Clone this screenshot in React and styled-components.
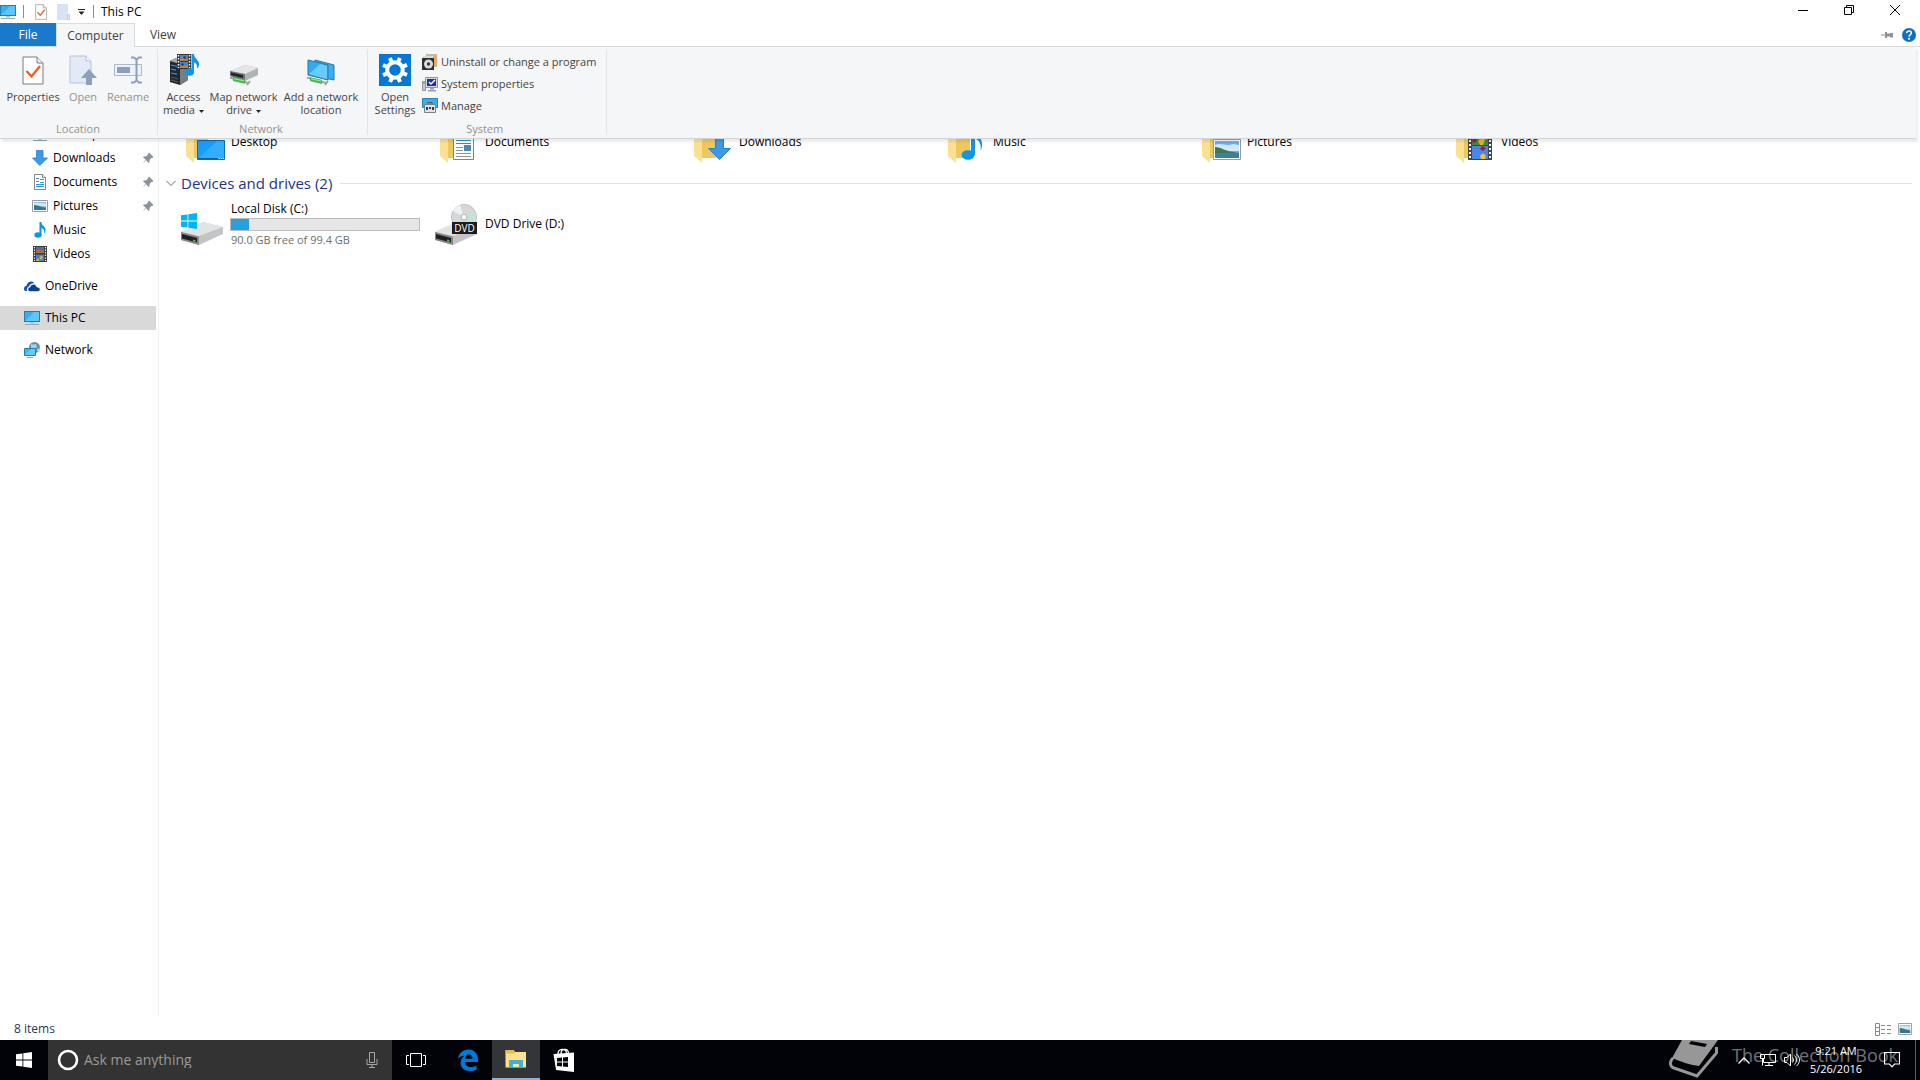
import React, { useState } from "react";
import styled, { createGlobalStyle } from "styled-components";

const GlobalStyle = createGlobalStyle`
  * {
    box-sizing: border-box;
  }

  body {
    margin: 0;
    background: #fff;
    color: #000;
    font: 12px/16px "Open Sans", "Noto Sans", sans-serif;
  }

  button, input {
    font: inherit;
    color: inherit;
    border: 0;
    padding: 0;
    margin: 0;
    background: none;
  }
`;

const Screen = styled.div`
  display: flex;
  flex-direction: column;
  height: 100vh;
  overflow: hidden;
`;

// ---------- title bar and tabs ----------

const TitleBar = styled.header`
  display: flex;
  align-items: center;
  height: 23px;
  padding-right: 2px;
`;

const QuickButton = styled.button`
  display: flex;
  justify-content: center;
  width: ${(props) => props.$width || 22}px;
`;

const Divider = styled.span`
  width: 1px;
  height: 13px;
  background: #8c8c8c;
  margin: 0 7px;
`;

const Title = styled.h1`
  flex: 1;
  margin: 0;
  font-size: 12px;
  font-weight: 400;
`;

const CaptionButton = styled.button`
  display: flex;
  align-items: center;
  align-self: flex-start;
  justify-content: center;
  width: 46px;
  height: 20px;
`;

const TabBar = styled.nav`
  display: flex;
  align-items: stretch;
  height: 24px;
  border-bottom: 1px solid #d9dadb;
`;

const Tab = styled.button`
  width: ${(props) => props.$width}px;
  color: ${(props) => (props.$file ? "#fff" : "#444")};
  background: ${(props) => (props.$file ? "#1979ca" : props.$active ? "#f5f6f7" : "none")};
  border: solid #dadbdc;
  border-width: ${(props) => (props.$active ? "1px 1px 0 1px" : "0")};
  margin-bottom: ${(props) => (props.$active ? "-1px" : "0")};
`;

const TabTools = styled.div`
  display: flex;
  align-items: center;
  gap: 8px;
  margin-left: auto;
  padding-right: 4px;

  button {
    display: flex;
  }
`;

// ---------- ribbon ----------

const Body = styled.div`
  position: relative;
  display: flex;
  flex: 1;
  min-height: 0;
`;

// The ribbon is collapsed, so it opens over the folder instead of pushing it down
const Ribbon = styled.section`
  position: absolute;
  top: 0;
  left: 0;
  right: 4px;
  z-index: 1;
  display: flex;
  height: 92px;
  padding: 2px 0 3px;
  font-size: 11px;
  color: #444;
  background: #f5f6f7;
  border-bottom: 1px solid #d2d3d4;
  box-shadow: 2px 3px 2px rgba(0, 0, 0, 0.08);
`;

const Group = styled.div`
  display: flex;
  flex-direction: column;
  justify-content: space-between;
  padding: 0 ${(props) => props.$right}px 0 ${(props) => props.$left}px;
  border-right: 1px solid #e2e3e4;
`;

const GroupRow = styled.div`
  display: flex;
  align-items: flex-start;
`;

const GroupLabel = styled.div`
  text-align: center;
  line-height: 13px;
  color: #929292;
`;

const BigButton = styled.button`
  display: flex;
  flex-direction: column;
  align-items: center;
  gap: 4px;
  width: ${(props) => props.$width}px;
  padding-top: 5px;
  line-height: 13px;
  white-space: nowrap;
  color: ${(props) => (props.disabled ? "#929292" : "#444")};
`;

const SmallList = styled.div`
  display: flex;
  flex-direction: column;
  margin-left: 5px;
  padding-top: 2px;
`;

const SmallButton = styled.button`
  display: flex;
  align-items: center;
  gap: 3px;
  height: 22px;
  white-space: nowrap;
`;

// ---------- navigation and content ----------

const Sidebar = styled.nav`
  flex: none;
  width: 159px;
  padding: 75px 2px 0 0;
  border-right: 1px solid #f0f0f0;
`;

const NavItem = styled.button`
  display: flex;
  align-items: center;
  width: 100%;
  height: 24px;
  gap: 5px;
  margin-top: ${(props) => (props.$root ? 8 : 0)}px;
  padding: 0 2px 0 ${(props) => (props.$root ? 24 : 32)}px;
  text-align: left;
  background: ${(props) => (props.$selected ? "#d9d9d9" : "none")};
`;

const NavLabel = styled.span`
  flex: 1;
`;

const Content = styled.main`
  flex: 1;
  min-width: 0;
  padding: 65px 8px 0 7px;
`;

const Tiles = styled.div`
  display: grid;
  grid-template-columns: repeat(auto-fill, 254px);
  padding-left: 11px;
`;

const Tile = styled.div`
  display: flex;
  align-items: center;
  gap: 6px;
  height: 60px;
`;

const TileText = styled.div`
  display: flex;
  flex-direction: column;
`;

const Muted = styled.span`
  font-size: 11px;
  color: #6d6d6d;
`;

const Capacity = styled.div`
  width: 190px;
  height: 13px;
  margin: 1px 0 1px -1px;
  background: #e6e6e6;
  border: 1px solid #bcbcbc;
`;

const CapacityFill = styled.div`
  height: 100%;
  background: #26a0da;
`;

const SectionHeader = styled.h2`
  display: flex;
  align-items: center;
  height: 22px;
  margin: 0;
  font-size: 15px;
  font-weight: 400;
  color: #1e3287;

  svg {
    margin-right: 5px;
  }

  &::after {
    content: "";
    flex: 1;
    height: 1px;
    margin-left: 8px;
    background: #e2e2e2;
  }
`;

const StatusBar = styled.footer`
  display: flex;
  align-items: center;
  height: 24px;
  padding: 2px 8px 0 14px;
  color: #1e395b;
`;

const ViewButtons = styled.div`
  display: flex;
  gap: 7px;
  margin-left: auto;

  button {
    display: flex;
  }
`;

// ---------- taskbar ----------

const TaskBar = styled.footer`
  position: relative;
  display: flex;
  height: 40px;
  color: #fff;
  background: #010308;
`;

const TaskButton = styled.button`
  display: flex;
  align-items: center;
  justify-content: center;
  width: 48px;
  margin-right: ${(props) => (props.$spaced ? 4 : 0)}px;
  background: ${(props) => (props.$active ? "#343539" : "none")};
  border-bottom: ${(props) => (props.$active ? "2px solid #76b9ed" : "0")};
`;

const Search = styled.label`
  display: flex;
  align-items: center;
  gap: 5px;
  width: 344px;
  padding: 0 14px 0 9px;
  background: #333;

  input {
    flex: 1;
    min-width: 0;
    font-size: 14px;
    outline: none;
  }

  input::placeholder {
    color: #9a9a9a;
    opacity: 1;
  }
`;

const Tray = styled.div`
  display: flex;
  align-items: center;
  margin-left: auto;
  padding-right: 4px;

  button {
    display: flex;
    justify-content: center;
    width: 24px;
  }

  button:last-child {
    width: 48px;
    height: 40px;
    align-items: center;
    border-right: 1px solid #5a5c60;
  }
`;

const Clock = styled.time`
  width: 64px;
  font-size: 11px;
  line-height: 18px;
  text-align: center;
`;

const Watermark = styled.div`
  position: absolute;
  top: 0;
  right: 22px;
  display: flex;
  align-items: flex-start;
  gap: 13px;
  font-size: 18px;
  line-height: 30px;
  color: rgba(255, 255, 255, 0.45);
  pointer-events: none;
`;

// ---------- icons ----------

const Monitor = ({ size = 16 }) => (
  <svg width={size} height={size} viewBox="0 0 16 16">
    <rect x="0.5" y="1.5" width="15" height="10" fill="#31b0f8" stroke="#2a7ca8" />
    <path d="M1 11 L10 2 H15 V11Z" fill="#5cc6ff" />
    <path d="M6 12h4v1.500H6z" fill="#a8c4d4" />
    <path d="M1 14.500h14" stroke="#8aa9ba" />
  </svg>
);

const CheckPage = ({ w = 22, h = 29 }) => (
  <svg width={w} height={h} viewBox="0 0 22 29">
    <path d="M1 1h14l6 6v21H1z" fill="#fff" stroke="#7a7a7a" />
    <path d="M15 1v6h6" fill="#eee" stroke="#7a7a7a" />
    <path d="M4.500 15l5 5.500L18 10" fill="none" stroke="#e8622a" strokeWidth="2.400" />
  </svg>
);

const PaleFolder = () => (
  <svg width="13" height="16" viewBox="0 0 13 16">
    <path d="M0 0h11v10h2v6H0z" fill="#d6e2f5" />
    <path d="M10.500 10.500h2v5h-2z" fill="#e8eefa" stroke="#bfcde4" />
  </svg>
);

const OpenPage = () => (
  <svg width="28" height="30" viewBox="0 0 28 30">
    <path d="M1 1h16l5 5v22H1z" fill="#e2eaf7" stroke="#b5c4dd" />
    <path d="M17 1v5h5" fill="#f3f6fb" stroke="#b5c4dd" />
    <path d="M20 14l8 9h-5v7h-6v-7h-5z" fill="#8c9fbd" />
  </svg>
);

const RenameBox = () => (
  <svg width="28" height="28" viewBox="0 0 28 28">
    <path d="M0.500 8.500h27v11h-27z" fill="#edf2fb" stroke="#a9b9d3" />
    <path d="M3 11h13v6H3z" fill="#8c9fbd" />
    <path d="M17 1.500h3l2.500 2 2.500-2h3M17 26.500h3l2.500-2 2.500 2h3M22.500 3v22" fill="none" stroke="#8c9fbd" strokeWidth="2" />
  </svg>
);

const Note = ({ w = 16, h = 16 }) => (
  <svg width={w} height={h} viewBox="0 0 16 16">
    <ellipse cx="6" cy="13" rx="3.700" ry="2.800" fill="#0e96ea" />
    <path d="M7.500 0h2c0 4 4.500 4 4 8.500-.1 1.500-.8 2.500-1.500 3 .8-3-.5-5-2.500-5.500V13h-2z" fill="#0e96ea" />
  </svg>
);

const Film = ({ w = 14, h = 16 }) => (
  <svg width={w} height={h} viewBox="0 0 14 16">
    <path d="M0 0h14v16H0z" fill="#3c3c3c" />
    <path d="M1.500 1v14M12.500 1v14" stroke="#f4f4f4" strokeWidth="1.200" strokeDasharray="1.300 1.300" />
    <path d="M3 1h8v6H3z" fill="#4a6cb8" />
    <path d="M3 8.500h8V15H3z" fill="#3f7de0" />
    <path d="M3 5l3-2 2 2 3-1v3H3z" fill="#a8772b" />
    <path d="M8 9.500l2 1.500-1 2.500H7.500L6.500 11zM4 13l2-1v3H3z" fill="#e5b321" />
    <path d="M5 1.500l2 1-1 2-2-1.500z" fill="#d0453b" />
  </svg>
);

const MediaServer = () => (
  <svg width="32" height="32" viewBox="0 0 32 32">
    <path d="M2 7l6-3 12 2v20l-8 5-10-3z" fill="#23272c" />
    <path d="M12 10l8-4v20l-8 5z" fill="#777d84" />
    <path d="M2 7l6-3 12 2-8 4z" fill="#a3a9af" />
    <path d="M3 11l7 1.500M3 15l5 1.200M3 19l6 1.200" stroke="#1ba1f2" strokeWidth="1.200" />
    <path d="M3 23l7 2M3 26l7 2" stroke="#55616c" />
    <path d="M9 0h14v15H9z" fill="#333" />
    <path d="M10.500 1v13M21.500 1v13" stroke="#fff" strokeDasharray="1.500 1.500" strokeWidth="1.500" />
    <path d="M12 1h8v6h-8zM12 8h8v6h-8z" fill="#4f7fd6" />
    <path d="M12 5l3-2 3 3 2-1v2h-8zM12 12l3-3 2 3 3-1v3h-8z" fill="#b58a35" />
    <path d="M16 2l2 1-1 2-2-1zM14 9l2 1-1 2-2-1z" fill="#3a3140" />
    <ellipse cx="21.500" cy="18" rx="4.700" ry="3.800" fill="#1294ee" />
    <path d="M23.500 0h2.500c0 5 6 6 5 11-.3 2-1.200 3-2.200 3.500.8-4-.8-5.500-2.800-6V18h-2.500z" fill="#1294ee" />
  </svg>
);

const NetDrive = () => (
  <svg width="32" height="32" viewBox="0 0 32 32">
    <path d="M2 17L17 11l13 3v7l-13 6L2 22z" fill="#b0b3b5" />
    <path d="M2 17L17 11l13 3-13 6z" fill="#e3e5e6" />
    <path d="M2 17l15 3v7L2 22z" fill="#707375" />
    <path d="M3 18.500l12 2.800v2.700L3 21z" fill="#1f2122" />
    <path d="M5 23l12 2.500v4.200L5 27z" fill="#43b549" />
    <path d="M6 24l10 2.300v1.200L6 25.200z" fill="#9be597" />
    <path d="M17 28l4 1.500M2 23.500l3 1M22 27l-3 4" stroke="#a3a3a3" strokeWidth="2" />
  </svg>
);

const NetPlaces = () => (
  <svg width="32" height="32" viewBox="0 0 32 32">
    <path d="M10 6l19 5v15l-19-4z" fill="#3bb0ef" stroke="#2577a9" />
    <path d="M3 6l20 5v15L3 21z" fill="#2fabf4" stroke="#2577a9" />
    <path d="M4 20L15 10l7 1.800V25z" fill="#68ccff" />
    <path d="M5 23l12 3v4L5 27z" fill="#43b549" />
    <path d="M6 24l10 2.500v1.200L6 25.200z" fill="#9be597" />
    <path d="M17 28l5 1M2 23.500l3 1M23 27l-3 4" stroke="#a3a3a3" strokeWidth="2" />
  </svg>
);

const GearTile = () => (
  <svg width="32" height="32" viewBox="0 0 32 32">
    <path d="M0 0h32v32H0z" fill="#0078d7" />
    <circle cx="16" cy="16" r="7.800" fill="none" stroke="#fff" strokeWidth="4" />
    <g stroke="#fff" strokeWidth="4">
      {[22, 67, 112, 157].map((angle) => (
        <path key={angle} d="M16 3v5M16 24v5" transform={`rotate(${angle} 16 16)`} />
      ))}
    </g>
  </svg>
);

const Uninstall = () => (
  <svg width="16" height="16" viewBox="0 0 16 16">
    <path d="M4 0h11v13H4z" fill="#c9b8a3" />
    <path d="M12 2h3v10h-3z" fill="#eca662" />
    <path d="M1 2h10v3H1z" fill="#d8dbdc" />
    <path d="M0 4h12v12H0z" fill="#2e3032" />
    <circle cx="6.500" cy="10" r="4.500" fill="#d8dcdd" />
    <circle cx="6.500" cy="10" r="1.700" fill="#34383a" />
  </svg>
);

const SystemIcon = () => (
  <svg width="16" height="16" viewBox="0 0 16 16">
    <path d="M0.500 5.500h3v9h-3z" fill="#c8cacb" stroke="#909496" />
    <path d="M1 7h2" stroke="#48b04c" />
    <path d="M3.500 1.500h12v10h-12z" fill="#d6d9da" stroke="#929698" />
    <path d="M5 3h9v7H5z" fill="#1c2fb5" />
    <path d="M7 6l2 2 4-4" fill="none" stroke="#fff" strokeWidth="1.500" />
    <path d="M8 12h4v1.500H8zM6 14h8v1.500H6z" fill="#9b9fa1" />
  </svg>
);

const ManageIcon = () => (
  <svg width="16" height="16" viewBox="0 0 16 16">
    <path d="M0.500 0.500h15v9h-15z" fill="#36aff2" stroke="#2b83b2" />
    <path d="M6 6.500V4.500h4v2" fill="none" stroke="#555" />
    <path d="M2.500 6.500h11v8h-11z" fill="#dfe3e5" stroke="#7a8083" />
    <path d="M4 9h2v3H4zM10 9h2v3h-2zM7 9h2v2H7z" fill="#3a3f42" />
  </svg>
);

const DownArrow = ({ w = 16, h = 16 }) => (
  <svg width={w} height={h} viewBox="0 0 16 16">
    <path d="M4.500 0.500h6.500V8h4.500L7.800 15.500 0.500 8h4z" fill="#3b99e8" stroke="#2c7fc8" strokeWidth="0.800" />
  </svg>
);

const DocPage = () => (
  <svg width="16" height="16" viewBox="0 0 16 16">
    <path d="M2.500 0.500h8l3 3v12h-11z" fill="#fff" stroke="#858b8f" />
    <path d="M10.500 0.500v3h3" fill="#eee" stroke="#858b8f" />
    <path d="M4 4.500h3M8 5.500h4M4 7.500h3M8 8.500h4M4 10.500h8M4 12.500h8" stroke="#2f9bd0" />
  </svg>
);

const Photo = ({ w = 16, h = 12 }) => (
  <svg width={w} height={h} viewBox="0 0 16 12" preserveAspectRatio="none">
    <path d="M0.500 0.500h15v11h-15z" fill="#fff" stroke="#969b9f" />
    <path d="M2 2h12v8H2z" fill="#8cc4ef" />
    <path d="M2 3.500c3-2 5 .5 8-.5l4 1v2H2z" fill="#cfe8fa" />
    <path d="M2 5c3 0 6 1 9 2.500L14 8H2z" fill="#3f7d60" />
    <path d="M2 7.500h12V10H2z" fill="#37719e" />
  </svg>
);

const Cloud = () => (
  <svg width="16" height="16" viewBox="0 0 16 16">
    <path d="M0 11c0-2 1-3 2.500-3.200C3 4.500 6 3 8.500 3.700c1 .3 1.600.9 2 1.600C7.500 5 5.500 6.500 5 8.500c-1.700.5-2.400 2-2 4.500H2C.8 13 0 12.500 0 11z" fill="#1056b4" />
    <path d="M4 11.500c0-1.500 1-2.300 2.200-2.400C6.500 7 8.500 6 10.300 6.400c1.400.3 2.300 1.400 2.500 2.700 2 0 3.200 1 3.200 2.400 0 1.300-1 2-2.300 2H6.200C4.900 13.500 4 12.700 4 11.500z" fill="#103f91" stroke="#fff" strokeWidth="0.500" />
  </svg>
);

const NetworkIcon = () => (
  <svg width="16" height="16" viewBox="0 0 16 16">
    <circle cx="10.500" cy="5.500" r="5.500" fill="#5596b8" />
    <path d="M7 2c2 1 3 0 5 0l1 3-3 2-3-1zM13 7l3-1-1 4-2-1z" fill="#a9d3e4" />
    <path d="M0.500 6.500h11v7h-11z" fill="#39b4fa" stroke="#2a7ca8" />
    <path d="M1 13l6-6h4v6z" fill="#67caff" />
    <path d="M3 15.500h6" stroke="#8aa9ba" />
  </svg>
);

const Pin = () => (
  <svg width="12" height="12" viewBox="0 0 12 12">
    <path d="M7 0.500l4.500 4.500-1 1-.8-.3L7.500 8l.2 2-1 1L4.200 8.300 0.500 11.500 3.700 7.700 1 5.200l1-1 2 .2 2.200-2.200L6 1.500z" fill="#8b949c" />
  </svg>
);

const Folder = ({ children }) => (
  <svg width="48" height="48" viewBox="0 0 48 48">
    <path d="M9 4h22v36H14z" fill="#eec75f" />
    <path d="M9 4l8 4v37l-8-7z" fill="#fbe092" />
    {children}
  </svg>
);

const Disk = ({ children }) => (
  <svg width="48" height="48" viewBox="0 0 48 48">
    <path d="M4 32l22-10 20 5v7L22 45 4 40z" fill="#c3c4c6" />
    <path d="M4 32l22-10 20 5-24 9z" fill="#e2e3e5" />
    <path d="M4 32l18 4.500V45L4 40z" fill="#87898b" />
    <path d="M5 34l15 4v4.500L5 38.500z" fill="#1d1f20" />
    <path d="M16 39.500l2.500.6v1.800l-2.500-.6z" fill="#3dc448" />
    {children}
  </svg>
);

const WindowsMark = ({ color = "#00b6f0" }) => (
  <path
    d="M0 2.300l6.500-.9v6.200H0zM7.300 1.300L16 0v7.600H7.300zM0 8.400h6.500v6.200L0 13.700zM7.300 8.400H16V16l-8.700-1.300z"
    fill={color}
  />
);

const Chevron = () => (
  <svg width="10" height="7" viewBox="0 0 10 7">
    <path d="M0.500 1L5 5.500 9.500 1" fill="none" stroke="#6d6d6d" />
  </svg>
);

const CaretIcon = styled.svg`
  margin-left: 4px;
  vertical-align: middle;
`;

const Caret = () => (
  <CaretIcon width="5" height="3" viewBox="0 0 5 3">
    <path d="M0 0h5L2.500 3z" fill="#222" />
  </CaretIcon>
);

const IconBox = styled.span`
  display: flex;
  flex: none;
  align-items: center;
  justify-content: center;
  width: ${(props) => props.$size}px;
  height: ${(props) => props.$size}px;
`;

const navItems = [
  { label: "Desktop", icon: <Monitor />, pinned: true },
  { label: "Downloads", icon: <DownArrow />, pinned: true },
  { label: "Documents", icon: <DocPage />, pinned: true },
  { label: "Pictures", icon: <Photo />, pinned: true },
  { label: "Music", icon: <Note /> },
  { label: "Videos", icon: <Film /> },
  { label: "OneDrive", icon: <Cloud />, root: true },
  { label: "This PC", icon: <Monitor />, root: true },
  { label: "Network", icon: <NetworkIcon />, root: true },
];

const folders = [
  {
    label: "Desktop",
    art: (
      <>
        <path d="M20.500 22.500h27v19h-27z" fill="#1a9dfa" stroke="#0f6db5" />
        <path d="M21 41L40 23h7v18z" fill="#35adff" />
        <path d="M21 40.500h20" stroke="#0c5f9f" />
        <path d="M42 40.500h5" stroke="#fff" strokeDasharray="1 1" />
      </>
    ),
  },
  {
    label: "Documents",
    art: (
      <>
        <path d="M22.500 8.500h20v33h-20z" fill="#fff" stroke="#7d858b" />
        <path d="M25 22.500h15M25 25.500h15" stroke="#2f8fc4" />
        <path d="M25 29.500h7M25 32.500h7M25 35.500h15M25 38.500h15" stroke="#8d9499" />
        <path d="M33 27h7v6h-7z" fill="#4c86b5" />
      </>
    ),
  },
  { label: "Downloads", art: <path d="M30.500 8.500h8v22h7L34.500 41.500l-11-11h7z" fill="#3b99e8" stroke="#2c7fc8" /> },
  {
    label: "Music",
    art: (
      <>
        <ellipse cx="29" cy="37" rx="6.500" ry="4.800" fill="#0e96ea" />
        <path d="M32 10h4v27h-4z" fill="#0e96ea" />
        <path d="M36 15c7 5 9 11 5.500 18 1-7-1-10-5.500-13z" fill="#0e96ea" />
      </>
    ),
  },
  {
    label: "Pictures",
    art: (
      <svg x="20" y="21" width="28" height="21" viewBox="0 0 28 21">
        <path d="M0.500 0.500h27v20h-27z" fill="#fff" stroke="#969b9f" />
        <path d="M2 2h24v17H2z" fill="#6baaf0" />
        <path d="M2 6c6-3 12 2 18-1l6 1v6H2z" fill="#d2e7fb" />
        <path d="M2 8c6 0 10 4 18 5l6 1H2z" fill="#3d7a4d" />
        <path d="M2 14h24v5H2z" fill="#3b7fa8" />
      </svg>
    ),
  },
  {
    label: "Videos",
    art: (
      <svg x="21" y="14" width="24" height="28" viewBox="0 0 24 28">
        <path d="M0 0h24v28H0z" fill="#444" />
        <path d="M2 0v28M22 0v28" stroke="#f4f4f4" strokeWidth="2" strokeDasharray="2 2" />
        <path d="M4 0h16v13H4zM4 14h16v13H4z" fill="#4b86e6" />
        <path d="M4 9l5-3 4 4 7-3v6H4z" fill="#3c8a3f" />
        <path d="M14 5l3 3-2 5h-3l-2-4z" fill="#e8b31e" />
        <path d="M5 5l4 2-2 4-3-2zM14 14l4 2-3 3-3-2z" fill="#8c2930" />
        <path d="M15 21l3 3-1 3h-4l-1-3z" fill="#f0c428" />
      </svg>
    ),
  },
];

const App = () => {
  const [selected, setSelected] = useState("This PC");
  const [query, setQuery] = useState("");

  return (
    <Screen>
      <GlobalStyle />

      <TitleBar>
        <Monitor />
        <Divider />
        <QuickButton $width={20}>
          <CheckPage w={12} h={16} />
        </QuickButton>
        <QuickButton $width={25}>
          <PaleFolder />
        </QuickButton>
        <QuickButton $width={10}>
          <svg width="7" height="6" viewBox="0 0 7 6">
            <path d="M0 0.500h7" stroke="#222" />
            <path d="M0.500 2.500h6L3.500 6z" fill="#222" />
          </svg>
        </QuickButton>
        <Divider />
        <Title>This PC</Title>
        <CaptionButton>
          <svg width="10" height="10" viewBox="0 0 10 10">
            <path d="M0 5.500h10" stroke="#000" />
          </svg>
        </CaptionButton>
        <CaptionButton>
          <svg width="10" height="10" viewBox="0 0 10 10">
            <path d="M0.500 2.500h7v7h-7zM2.500 2.500v-2h7v7h-2" fill="none" stroke="#000" />
          </svg>
        </CaptionButton>
        <CaptionButton>
          <svg width="10" height="10" viewBox="0 0 10 10">
            <path d="M0 0l10 10M10 0L0 10" stroke="#000" />
          </svg>
        </CaptionButton>
      </TitleBar>

      <TabBar>
        <Tab $file $width={56}>File</Tab>
        <Tab $active $width={79}>Computer</Tab>
        <Tab $width={56}>View</Tab>
        <TabTools>
          <button>
            <svg width="13" height="8" viewBox="0 0 13 8">
              <path d="M0 4h5" stroke="#8b949c" />
              <path d="M4 1h2v1.500h3V2h3v4.500H9V5.500H6V7H4z" fill="#8b949c" />
            </svg>
          </button>
          <button>
            <svg width="14" height="14" viewBox="0 0 14 14">
              <circle cx="7" cy="7" r="7" fill="#0f6fc6" />
              <path d="M4.700 5.200C4.700 2.300 9.300 2.400 9.300 5.100 9.300 6.900 7 6.700 7 8.700" fill="none" stroke="#fff" strokeWidth="1.500" />
              <circle cx="7" cy="10.800" r="1" fill="#fff" />
            </svg>
          </button>
        </TabTools>
      </TabBar>

      <Body>
        <Ribbon>
          <Group $left={5} $right={6}>
            <GroupRow>
              <BigButton $width={56}>
                <IconBox $size={32}><CheckPage /></IconBox>
                Properties
              </BigButton>
              <BigButton $width={44} disabled>
                <IconBox $size={32}><OpenPage /></IconBox>
                Open
              </BigButton>
              <BigButton $width={46} disabled>
                <IconBox $size={32}><RenameBox /></IconBox>
                Rename
              </BigButton>
            </GroupRow>
            <GroupLabel>Location</GroupLabel>
          </Group>

          <Group $left={3} $right={6}>
            <GroupRow>
              <BigButton $width={45}>
                <MediaServer />
                <span>Access<br />media<Caret /></span>
              </BigButton>
              <BigButton $width={75}>
                <NetDrive />
                <span>Map network<br />drive<Caret /></span>
              </BigButton>
              <BigButton $width={80}>
                <NetPlaces />
                <span>Add a network<br />location</span>
              </BigButton>
            </GroupRow>
            <GroupLabel>Network</GroupLabel>
          </Group>

          <Group $left={5} $right={10}>
            <GroupRow>
              <BigButton $width={44}>
                <GearTile />
                <span>Open<br />Settings</span>
              </BigButton>
              <SmallList>
                <SmallButton><Uninstall />Uninstall or change a program</SmallButton>
                <SmallButton><SystemIcon />System properties</SmallButton>
                <SmallButton><ManageIcon />Manage</SmallButton>
              </SmallList>
            </GroupRow>
            <GroupLabel>System</GroupLabel>
          </Group>
        </Ribbon>

        <Sidebar>
          {navItems.map((item) => (
            <NavItem
              key={item.label}
              $root={item.root}
              $selected={item.label === selected}
              onClick={() => setSelected(item.label)}
            >
              <IconBox $size={16}>{item.icon}</IconBox>
              <NavLabel>{item.label}</NavLabel>
              {item.pinned && <Pin />}
            </NavItem>
          ))}
        </Sidebar>

        <Content>
          <Tiles>
            {folders.map((folder) => (
              <Tile key={folder.label}>
                <Folder>{folder.art}</Folder>
                {folder.label}
              </Tile>
            ))}
          </Tiles>
          <SectionHeader>
            <Chevron />
            Devices and drives (2)
          </SectionHeader>
          <Tiles>
            <Tile>
              <Disk>
                <svg x="4" y="13" width="16" height="16" viewBox="0 0 16 16">
                  <WindowsMark />
                </svg>
              </Disk>
              <TileText>
                <span>Local Disk (C:)</span>
                <Capacity>
                  <CapacityFill style={{ width: `${((99.4 - 90) / 99.4) * 100}%` }} />
                </Capacity>
                <Muted>90.0 GB free of 99.4 GB</Muted>
              </TileText>
            </Tile>
            <Tile>
              <Disk>
                <circle cx="33" cy="17" r="12.500" fill="#d5d9da" stroke="#b9bec0" />
                <path d="M33 17L22 11a12 12 0 0 1 7-6z" fill="#eef2f2" />
                <path d="M33 17l11 5a12 12 0 0 0 0-10z" fill="#c3e2d8" />
                <circle cx="33" cy="17" r="3" fill="#f6f7f7" stroke="#aeb3b5" />
                <path d="M21 22h25v12H21z" fill="#1c1c1c" />
                <text x="33.500" y="31.500" fontSize="10" fill="#fff" textAnchor="middle">DVD</text>
              </Disk>
              DVD Drive (D:)
            </Tile>
          </Tiles>
        </Content>
      </Body>

      <StatusBar>
        8 items
        <ViewButtons>
          <button>
            <svg width="16" height="13" viewBox="0 0 16 13">
              <path d="M0.500 0.500h4v12h-4zM0.500 4.500h4M0.500 8.500h4" fill="none" stroke="#8a8a8a" />
              <path d="M6 2.500h4M12 2.500h4M6 6.500h4M12 6.500h4M6 10.500h4M12 10.500h4" stroke="#8a8a8a" />
            </svg>
          </button>
          <button>
            <Photo w={14} h={12} />
          </button>
        </ViewButtons>
      </StatusBar>

      <TaskBar>
        <TaskButton>
          <svg width="16" height="16" viewBox="0 0 16 16">
            <WindowsMark color="#fff" />
          </svg>
        </TaskButton>
        <Search>
          <svg width="22" height="22" viewBox="0 0 22 22">
            <circle cx="11" cy="11" r="9" fill="none" stroke="#fff" strokeWidth="2.600" />
          </svg>
          <input
            type="text"
            placeholder="Ask me anything"
            value={query}
            onChange={(e) => setQuery(e.target.value)}
          />
          <svg width="12" height="18" viewBox="0 0 12 18">
            <path d="M3.500 1.500h5v10h-5zM1 8v5.500h10V8M6 14v3M3 16.500h6" fill="none" stroke="#a6a6a6" />
          </svg>
        </Search>
        <TaskButton $spaced>
          <svg width="20" height="14" viewBox="0 0 20 14">
            <path d="M4.500 0.500h11v13h-11zM3 2.500H0.500v9H3M17 2.500h2.500v9H17" fill="none" stroke="#fff" />
          </svg>
        </TaskButton>
        <TaskButton>
          <svg width="22" height="22" viewBox="0 0 22 22">
            <path
              d="M1 9.500C2 3.500 6.500.5 11.500.5 17.500.5 21 5 21 10.500V13H8c0 3.500 3 5 6 5 2 0 4-.5 5.500-1.500v4.300C17.500 21.600 15.500 22 13 22 7.500 22 3.500 18.800 3.500 14c0-3.500 2-6 5-7.500C4.800 6.800 2.500 8 1 9.500zM8 9.700h7.500c0-2.700-1.300-4.200-3.700-4.200C9.500 5.500 8.300 7.500 8 9.700z"
              fill="#0078d7"
            />
          </svg>
        </TaskButton>
        <TaskButton $active>
          <svg width="22" height="18" viewBox="0 0 22 18">
            <path d="M0.500 0h8l1.500 2H21v15.500H0.500z" fill="#fce28e" />
            <path d="M0.500 0h8l1.500 2-1 1.500H0.500z" fill="#e5bd4c" />
            <path d="M4 10h14v8h-4v-4H8v4H4z" fill="#3fb0d8" />
          </svg>
        </TaskButton>
        <TaskButton>
          <svg width="22" height="24" viewBox="0 0 22 24">
            <path d="M5 6c0-6 8-6 8.500-1M8 6c0-6 7-6 7.500-1" fill="none" stroke="#fff" strokeWidth="1.300" />
            <path d="M0.500 6L21 4.500V24l-18-2z" fill="#fff" />
            <path d="M4 10l5-.5v4H4zM10 9.400l5-.5v4.600h-5zM4 14.500h5v4l-5-.5zM10 14.500h5v4.600l-5-.5z" fill="#010308" />
          </svg>
        </TaskButton>
        <Tray>
          <button>
            <svg width="12" height="7" viewBox="0 0 12 7">
              <path d="M0.500 6.500L6 1l5.500 5.500" fill="none" stroke="#fff" strokeWidth="1.300" />
            </svg>
          </button>
          <button>
            <svg width="16" height="14" viewBox="0 0 16 14">
              <path d="M5 1.500h10.500v8H3.500V6M5 12.500h8M9 10v2.500M0.500 1.500h4v4h-4zM2.500 5.500v7" fill="none" stroke="#fff" />
            </svg>
          </button>
          <button>
            <svg width="16" height="14" viewBox="0 0 16 14">
              <path d="M0.500 4.500h2.500L6.500 1v12L3 9.500H0.500zM8.500 4.500c1.200 1.500 1.200 3.500 0 5M10.500 2.500c2.500 2.500 2.500 6.500 0 9M12.500 1c4 3.500 4 8.500 0 12" fill="none" stroke="#fff" />
            </svg>
          </button>
          <Clock>
            9:21 AM
            <br />
            5/26/2016
          </Clock>
          <button>
            <svg width="16" height="16" viewBox="0 0 16 16">
              <path d="M0.500 0.500h15v11.500h-5L8 14.800 5.500 12h-5z" fill="none" stroke="#fff" strokeWidth="1.200" />
            </svg>
          </button>
        </Tray>
        <Watermark>
          <svg width="50" height="40" viewBox="0 0 50 40">
            <path d="M13 0h36L30 26C22 25 12 22 3 18z" fill="#979797" />
            <path d="M22 1l16 3-2 3-16-3z" fill="#010308" />
            <path d="M4 18c-4 4-3 9 1 10l23 8L47.500 13V7" fill="none" stroke="#979797" strokeWidth="3" />
          </svg>
          The Collection Book
        </Watermark>
      </TaskBar>
    </Screen>
  );
};

export default App;
